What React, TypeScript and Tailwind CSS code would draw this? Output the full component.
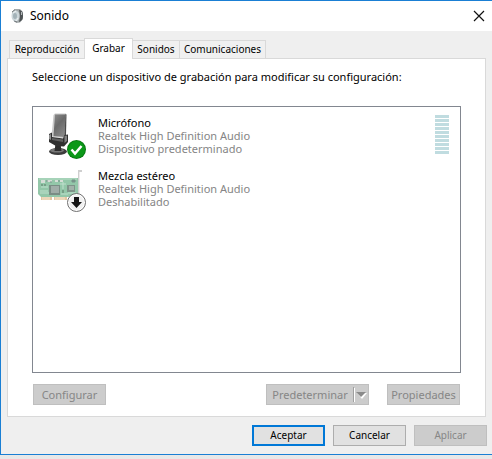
import { useState } from "react";

interface Device {
  id: string;
  name: string;
  driver: string;
  status: string;
  level: boolean;
}

const TABS = [
  { label: "Reproducción", width: "w-[76px]" },
  { label: "Grabar", width: "w-[49px]" },
  { label: "Sonidos", width: "w-[48px]" },
  { label: "Comunicaciones", width: "w-[87px]" },
];

const DEVICES: Device[] = [
  {
    id: "mic",
    name: "Micrófono",
    driver: "Realtek High Definition Audio",
    status: "Dispositivo predeterminado",
    level: true,
  },
  {
    id: "mix",
    name: "Mezcla estéreo",
    driver: "Realtek High Definition Audio",
    status: "Deshabilitado",
    level: false,
  },
];

const LEVEL_BARS = [0, 1, 2, 3, 4, 5, 6, 7, 8, 9];

function SpeakerIcon() {
  return (
    <svg width="14" height="16" viewBox="0 0 14 16" aria-hidden="true">
      <path d="M2 4l3-3h5l3 3v7l-3 3.500-4 .5-4-5z" fill="#a3a9ab" />
      <path d="M9 2c3 0 4 3 4 6s-1 5-4 6c1-3 1-9 0-12z" fill="#4d5254" />
      <ellipse cx="5.500" cy="8" rx="4" ry="5.500" fill="#ccd6da" />
      <ellipse cx="5" cy="8" rx="2" ry="3" fill="#a3b2b8" />
      <path d="M3 5l3-2M8 10l-2 3" stroke="#eef2f3" />
      <path d="M2 4l3-2.500M4 13l3 1" stroke="#777d80" />
      <path d="M11.500 4v3" stroke="#b5babc" />
    </svg>
  );
}

function MicrophoneIcon() {
  return (
    <svg width="50" height="48" viewBox="0 0 50 48" className="shrink-0" aria-hidden="true">
      <defs>
        <linearGradient id="micBody" x1="0" y1="0" x2="0.6" y2="1">
          <stop offset="0" stopColor="#8c8c8c" />
          <stop offset="0.5" stopColor="#6a6a6a" />
          <stop offset="1" stopColor="#858585" />
        </linearGradient>
      </defs>
      <ellipse cx="20" cy="39.500" rx="9" ry="3.500" fill="#3c3c3c" />
      <ellipse cx="19" cy="38.500" rx="7" ry="2" fill="#777" />
      <path d="M17.500 32h5l1 7h-7z" fill="#2d2d2d" />
      <path d="M15.500 3l1.500-1.500h11L28 24l-2 2-11-1-1.500-1z" fill="#c9c9c9" />
      <path d="M17 2.500h10.500L26.500 25 15.500 24z" fill="url(#micBody)" />
      <path d="M27.500 2l1 .5L28 23l-1.500 1z" fill="#4a4a4a" />
      <path d="M11 22l3-1.500V25l11 1.500 1.500-3.500 3.500-.5V30l-4 4.500-8-.5-7-4z" fill="#303030" />
      <path d="M11 23l2-1v6l-2-1z" fill="#8d8d8d" />
      <path d="M14 26l11 1.500V30l-11-2z" fill="#606060" />
      <path d="M26.500 24l2.500-.5V29l-2.500 2z" fill="#808080" />
      <circle cx="38.500" cy="37.500" r="9.500" fill="#087a12" />
      <circle cx="38.500" cy="37.500" r="8.500" fill="#0b9818" />
      <path d="M33.500 37.500l3.500 4 6.500-7.500" fill="none" stroke="#fff" strokeWidth="2.500" />
    </svg>
  );
}

function SoundCardIcon() {
  return (
    <svg width="50" height="48" viewBox="0 0 50 48" className="shrink-0" aria-hidden="true">
      <path d="M3 31h11v4H3zM16 31h13v4H16z" fill="#e3c7a1" />
      <path d="M5 32v3M7 32v3M9 32v3M11 32v3M18 32v3M20 32v3M22 32v3M24 32v3M26 32v3" stroke="#f6e8d4" />
      <path d="M0 13h40v18l-4 1H3l-3-3z" fill="#93c7a9" />
      <path d="M1 14h38" stroke="#b9dfc8" />
      <path d="M2 26h8M2 28h9M22 19h6M23 29h7M25 17v7M3 22h7M30 28h8" stroke="#bfe0cd" />
      <path d="M3 15h4v3H3zM9 15h5v2H9zM17 15h3v2h-3zM22 15h3v2h-3z" fill="#d5ddd6" />
      <path d="M8 16h2M12 17h2M20 16h2M34 15h3v2h-3z" fill="#79938a" stroke="#79938a" />
      <rect x="11" y="20" width="11" height="10" fill="#7a8d85" />
      <rect x="13" y="21" width="8" height="7" fill="#a0ada8" />
      <rect x="29" y="20" width="8" height="7" fill="#7f9389" />
      <rect x="31" y="21" width="5" height="4" fill="#a2b1a9" />
      <path d="M4 19v2M7 19v2M25 25v3" stroke="#77a088" strokeWidth="2" />
      <path d="M44 6h-3v25" fill="none" stroke="#cfcfcf" strokeWidth="2" />
      <path d="M41.500 7v23" stroke="#ececec" />
      <circle cx="38.500" cy="37.500" r="9" fill="#fff" stroke="#6f6f6f" />
      <circle cx="38.500" cy="37.500" r="7.500" fill="#f1f1f1" />
      <path d="M36 32h5v5h3l-5.500 6-5.500-6h3z" fill="#151515" />
    </svg>
  );
}

function LevelMeter() {
  return (
    <div className="mt-[3px] flex w-[14px] flex-col gap-px">
      {LEVEL_BARS.map((bar) => (
        <span key={bar} className="h-[3px] bg-[#c0dce0]" />
      ))}
    </div>
  );
}

export default function App() {
  const [tab, setTab] = useState("Grabar");

  return (
    <div className="bg-gradient-to-b from-[#c6c6c6] to-[#e8e8e8] pb-1 font-['Noto_Sans','Open_Sans',sans-serif] text-[11px] leading-[13px] text-black">
      <div className="border-y border-l border-[#1a7fd4] bg-[#efefef]">
        <header className="flex h-[30px] items-center bg-white pr-[7px] pl-[9px]">
          <SpeakerIcon />
          <h1 className="ml-[6px] flex-1 text-xs">Sonido</h1>
          <button type="button" aria-label="Cerrar">
            <svg width="12" height="12" viewBox="0 0 12 12" aria-hidden="true">
              <path d="M1 1l10 10M11 1L1 11" stroke="#111" strokeWidth="1.2" />
            </svg>
          </button>
        </header>

        <main className="px-[6px] pt-[7px]">
          <div role="tablist" className="flex items-end pl-[2px]">
            {TABS.map((t) => (
              <button
                key={t.label}
                type="button"
                role="tab"
                aria-selected={tab === t.label}
                onClick={() => setTab(t.label)}
                className={`-mr-px border border-b-0 border-[#d9d9d9] text-center text-[10px] whitespace-nowrap ${t.width} ${
                  tab === t.label
                    ? "relative z-10 -mb-px h-[21px] bg-white pb-[2px]"
                    : "h-[18px] bg-[#f0f0f0]"
                }`}
              >
                {t.label}
              </button>
            ))}
          </div>

          <section className="border border-[#d9d9d9] bg-white px-6 pt-[11px] pb-[11px]">
            <p id="device-help">
              Seleccione un dispositivo de grabación para modificar su configuración:
            </p>
            <ul
              aria-labelledby="device-help"
              className="mt-[23px] min-h-[267px] border border-[#828790] py-[5px] pr-[11px] pl-[5px]"
            >
              {DEVICES.map((d) => (
                <li key={d.id} className="mb-[5px] flex h-12 items-start">
                  {d.id === "mic" ? <MicrophoneIcon /> : <SoundCardIcon />}
                  <div className="ml-[10px] flex-1 pt-1 text-[#858585]">
                    <p className="text-black">{d.name}</p>
                    <p>{d.driver}</p>
                    <p>{d.status}</p>
                  </div>
                  {d.level && <LevelMeter />}
                </li>
              ))}
            </ul>

            <div className="mt-[11px] flex px-px text-[#868686]">
              <button type="button" disabled className="h-[21px] w-[73px] border border-[#bfbfbf] bg-[#cccccc]">
                Configurar
              </button>
              <button
                type="button"
                disabled
                className="ml-auto flex h-[21px] w-[103px] items-center border border-[#bfbfbf] bg-[#cccccc]"
              >
                <span className="flex-1">Predeterminar</span>
                <svg width="15" height="19" viewBox="0 0 15 19" aria-hidden="true">
                  <path d="M.5 2v15" stroke="#a0a0a0" />
                  <path d="M1.500 3v14" stroke="#fff" />
                  <path d="M4 8h10l-5 6z" fill="#fff" />
                  <path d="M3 7h10l-5 5z" fill="#8a8a8a" />
                </svg>
              </button>
              <button type="button" disabled className="ml-[18px] h-[21px] w-[73px] border border-[#bfbfbf] bg-[#cccccc]">
                Propiedades
              </button>
            </div>
          </section>
        </main>

        <footer className="flex justify-end gap-2 pt-2 pr-[5px] pb-2 text-[10px]">
          <button type="button" className="h-[21px] w-[73px] border-2 border-[#0078d7] bg-[#e1e1e1]">
            Aceptar
          </button>
          <button type="button" className="h-[21px] w-[73px] border border-[#adadad] bg-[#e1e1e1]">
            Cancelar
          </button>
          <button type="button" disabled className="h-[21px] w-[73px] border border-[#bfbfbf] bg-[#cccccc] text-[#868686]">
            Aplicar
          </button>
        </footer>
      </div>
    </div>
  );
}
